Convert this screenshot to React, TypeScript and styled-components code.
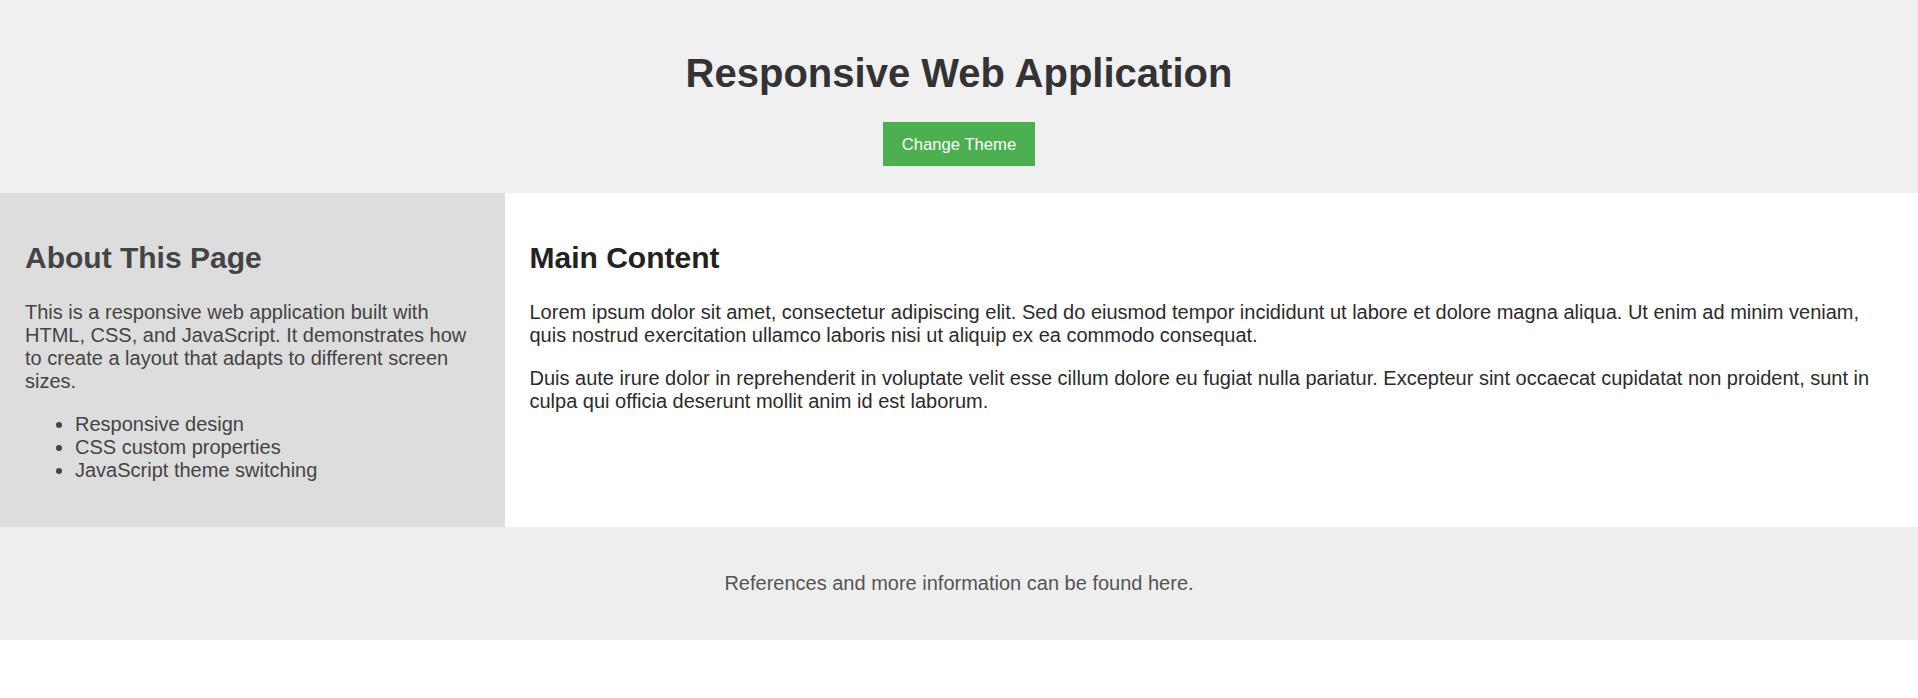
import styled, { createGlobalStyle } from 'styled-components';

const GlobalStyle = createGlobalStyle`
  html, body {
    margin: 0;
    padding: 0;
    background: #ffffff;
    font-family: 'Liberation Sans', Arial, sans-serif;
    font-size: 20px;
    color: #333;
  }
`;

const Header = styled.header`
  background-color: #f0f0f0;
  padding: 25px 25px 27px;
  text-align: center;
`;

const Title = styled.h1`
  font-size: 40px;
  font-weight: 700;
  color: #333;
  margin: 25px 0 26px;
  line-height: 46px;
`;

const ThemeButton = styled.button`
  font-family: 'Liberation Sans', Arial, sans-serif;
  font-size: 16.66px;
  line-height: 19px;
  background-color: #4caf50;
  color: #ffffff;
  border: none;
  padding: 12.5px 19px;
  cursor: pointer;
  display: inline-block;
  vertical-align: top;
`;

const Layout = styled.div`
  display: flex;
`;

const Section = styled.section<{ $grow: number; $bg: string; $color: string; $head: string }>`
  flex: ${(p) => p.$grow} 1 0;
  min-width: 0;
  padding: 25px;
  background-color: ${(p) => p.$bg};
  color: ${(p) => p.$color};

  h2 {
    font-size: 30px;
    font-weight: 700;
    line-height: 34.5px;
    margin: 23px 0 25px;
    color: ${(p) => p.$head};
  }
`;

const Paragraph = styled.p`
  font-size: 20px;
  line-height: 23px;
  margin: 20px 0;
`;

const FeatureList = styled.ul`
  font-size: 20px;
  line-height: 23px;
  margin: 20px 0;
  padding-left: 50px;
`;

const Footer = styled.footer`
  background-color: #eeeeee;
  padding: 25px;
  text-align: center;
  color: #555;
`;

const features = ['Responsive design', 'CSS custom properties', 'JavaScript theme switching'];

const App = () => {
  return (
    <>
      <GlobalStyle />
      <Header>
        <Title>Responsive Web Application</Title>
        <ThemeButton>Change Theme</ThemeButton>
      </Header>
      <Layout>
        <Section $grow={1} $bg="#dddddd" $color="#444" $head="#444">
          <h2>About This Page</h2>
          <Paragraph>
            This is a responsive web application built with HTML, CSS, and JavaScript. It
            demonstrates how to create a layout that adapts to different screen sizes.
          </Paragraph>
          <FeatureList>
            {features.map((f) => (
              <li key={f}>{f}</li>
            ))}
          </FeatureList>
        </Section>
        <Section $grow={3} $bg="#ffffff" $color="#2b2b2b" $head="#222">
          <h2>Main Content</h2>
          <Paragraph>
            Lorem ipsum dolor sit amet, consectetur adipiscing elit. Sed do eiusmod tempor
            incididunt ut labore et dolore magna aliqua. Ut enim ad minim veniam, quis nostrud
            exercitation ullamco laboris nisi ut aliquip ex ea commodo consequat.
          </Paragraph>
          <Paragraph>
            Duis aute irure dolor in reprehenderit in voluptate velit esse cillum dolore eu
            fugiat nulla pariatur. Excepteur sint occaecat cupidatat non proident, sunt in culpa
            qui officia deserunt mollit anim id est laborum.
          </Paragraph>
        </Section>
      </Layout>
      <Footer>
        <Paragraph>References and more information can be found here.</Paragraph>
      </Footer>
    </>
  );
};

export default App;
